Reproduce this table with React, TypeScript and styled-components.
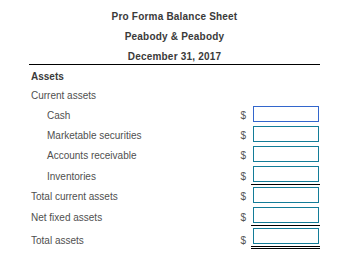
import React from 'react';
import styled, { createGlobalStyle } from 'styled-components';

const GlobalStyle = createGlobalStyle`
  html, body {
    margin: 0;
    padding: 0;
    background: #ffffff;
    font-family: "Liberation Sans", Arial, sans-serif;
  }
`;

const Sheet = styled.div`
  width: 291px;
  margin-left: 29px;
  padding-top: 7px;
  color: #4a4a4a;
  font-size: 10px;
`;

const Header = styled.div`
  border-bottom: 1px solid #000;
  text-align: center;
`;

const HeadLine = styled.div<{ $h?: number }>`
  height: ${({ $h }) => $h ?? 20}px;
  line-height: 20px;
  font-weight: bold;
  letter-spacing: 0.2px;
  color: #3a3a3a;
`;

// label | $ | amount cell ; text sits on the bottom of the row like the original form
const Row = styled.div<{ $h?: number }>`
  display: grid;
  grid-template-columns: 1fr 22px 69px;
  align-items: end;
  min-height: ${({ $h }) => $h ?? 20}px;
`;

const Label = styled.div<{ $indent?: boolean; $bold?: boolean }>`
  padding-left: ${({ $indent }) => ($indent ? 18 : 2)}px;
  line-height: 16px;
  font-weight: ${({ $bold }) => ($bold ? 'bold' : 'normal')};
  color: ${({ $bold }) => ($bold ? '#3a3a3a' : '#4f4f4f')};
  white-space: nowrap;
`;

const Dollar = styled.div`
  text-align: right;
  padding-right: 5px;
  line-height: 16px;
  color: #555;
`;

const Cell = styled.div<{ $rule?: 'single' | 'double' }>`
  align-self: start;
  padding: 2px 1px 2px 2px;
  border-bottom: ${({ $rule }) =>
    $rule === 'single' ? '1px solid #000' : $rule === 'double' ? '3px double #000' : 'none'};
`;

const AmountBox = styled.input<{ $focused?: boolean }>`
  display: block;
  box-sizing: border-box;
  width: 66px;
  height: 16px;
  margin: 0;
  padding: 0 3px;
  border: 1px solid ${({ $focused }) => ($focused ? '#3366cc' : '#137c98')};
  border-radius: 0;
  outline: none;
  background: #fff;
  font: 10px "Liberation Sans", Arial, sans-serif;
`;

type Line = {
  label: string;
  indent?: boolean;
  rule?: 'single' | 'double';
  focused?: boolean;
};

const lines: Line[] = [
  { label: 'Cash', indent: true, focused: true },
  { label: 'Marketable securities', indent: true },
  { label: 'Accounts receivable', indent: true },
  { label: 'Inventories', indent: true, rule: 'single' },
  { label: 'Total current assets' },
  { label: 'Net fixed assets', rule: 'single' },
  { label: 'Total assets', rule: 'double' },
];

export default function App() {
  return (
    <>
      <GlobalStyle />
      <Sheet>
        <Header>
          <HeadLine>Pro Forma Balance Sheet</HeadLine>
          <HeadLine>Peabody &amp; Peabody</HeadLine>
          <HeadLine $h={17}>December 31, 2017</HeadLine>
        </Header>
        <Row>
          <Label $bold>Assets</Label>
        </Row>
        <Row $h={19}>
          <Label>Current assets</Label>
        </Row>
        {lines.map((l) => (
          <Row key={l.label}>
            <Label $indent={l.indent}>{l.label}</Label>
            <Dollar>$</Dollar>
            <Cell $rule={l.rule}>
              <AmountBox $focused={l.focused} aria-label={l.label} />
            </Cell>
          </Row>
        ))}
      </Sheet>
    </>
  );
}
